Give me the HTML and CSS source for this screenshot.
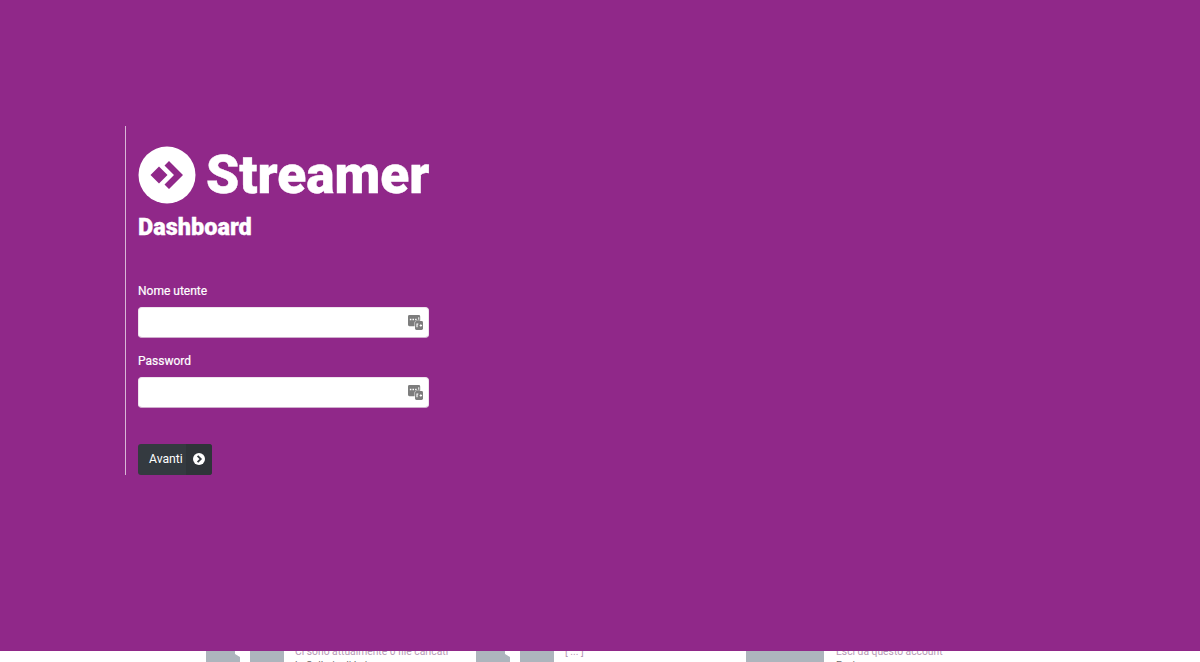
FILE: index.html
```html
<!DOCTYPE html>
<html lang="it">
<head>
<meta charset="utf-8">
<title>Streamer Dashboard</title>
<link rel="stylesheet" href="styles.css">
</head>
<body>
<div class="behind">
  <section class="widget">
    <div class="thumb small notch"></div>
    <div class="thumb small"></div>
    <div class="copy">
      <p class="link">Ci sono attualmente 0 file caricati</p>
      <p class="dark">la Galleria di Lei</p>
    </div>
  </section>
  <section class="widget">
    <div class="thumb small notch"></div>
    <div class="thumb small"></div>
    <div class="copy">
      <p class="link">[ ... ]</p>
    </div>
  </section>
  <section class="widget">
    <div class="thumb wide"></div>
    <div class="copy wide-copy">
      <p class="link">Esci da questo account</p>
      <p class="dark">Esci</p>
    </div>
  </section>
</div>

<main class="overlay">
  <form class="panel">
    <div class="brand">
      <svg class="logo" viewBox="0 0 58 58" aria-hidden="true">
        <circle cx="29" cy="29" r="28.5" fill="#fff"/>
        <path d="M21 20.500 29.500 29 21 37.500 12.500 29z" fill="#902889"/>
        <path d="M31 15 45 29 31 43l-4.500-4.500L36 29l-9.500-9.500z" fill="#902889"/>
      </svg>
      <span class="name">Streamer</span>
    </div>
    <h1 class="title">Dashboard</h1>

    <label class="label" for="user">Nome utente</label>
    <div class="field">
      <input class="input" id="user" type="text">
      <svg class="keyicon" viewBox="0 0 16 16" aria-hidden="true">
        <path d="M1.500 0h10A1.500 1.500 0 0 1 13 1.500V6H9a2 2 0 0 0-2 2v4H1.500A1.500 1.500 0 0 1 0 10.500v-9A1.500 1.500 0 0 1 1.500 0z" fill="#7d7d7d"/>
        <rect x="7.500" y="6.500" width="8.500" height="9.500" rx="1.500" fill="#7d7d7d"/>
        <path d="M2 4h1.600v1.600H2zM4.800 4h1.600v1.600H4.800zM7.600 4h1.600v1.600H7.600zM11 2.500h1v2.500h-1z" fill="#fff"/>
        <path d="M9 9h2v1.200h-.8V13H9zM12.400 10.600h2.600v1h-2.600zM13.200 9.800h1v2.600h-1z" fill="#fff"/>
      </svg>
    </div>

    <label class="label" for="pass">Password</label>
    <div class="field">
      <input class="input" id="pass" type="password">
      <svg class="keyicon" viewBox="0 0 16 16" aria-hidden="true">
        <path d="M1.500 0h10A1.500 1.500 0 0 1 13 1.500V6H9a2 2 0 0 0-2 2v4H1.500A1.500 1.500 0 0 1 0 10.500v-9A1.500 1.500 0 0 1 1.500 0z" fill="#7d7d7d"/>
        <rect x="7.500" y="6.500" width="8.500" height="9.500" rx="1.500" fill="#7d7d7d"/>
        <path d="M2 4h1.600v1.600H2zM4.800 4h1.600v1.600H4.800zM7.600 4h1.600v1.600H7.600zM11 2.500h1v2.500h-1z" fill="#fff"/>
        <path d="M9 9h2v1.200h-.8V13H9zM12.400 10.600h2.600v1h-2.600zM13.200 9.800h1v2.600h-1z" fill="#fff"/>
      </svg>
    </div>

    <button class="next" type="button">
      <span class="next-text">Avanti</span>
      <span class="next-icon">
        <svg viewBox="0 0 12 12" aria-hidden="true">
          <circle cx="6" cy="6" r="6" fill="#fff"/>
          <path d="M4.600 2.800 7.800 6 4.600 9.200" fill="none" stroke="#343a40" stroke-width="1.800"/>
        </svg>
      </span>
    </button>
  </form>
</main>
</body>
</html>
```

FILE: styles.css
```css
* { box-sizing: border-box; }
html, body { margin: 0; height: 100%; overflow: hidden; background: #fff; }
body { position: relative; font-family: Roboto, "Liberation Sans", sans-serif; }

.behind {
  display: flex;
  gap: 40px;
  padding: 644px 0 0 206px;
  height: 662px;
  overflow: hidden;
}
.widget { display: flex; width: 230px; gap: 10px; }
.thumb { background: #adb5bd; height: 40px; flex: none; }
.small { width: 34px; }
.wide { width: 78px; }
.notch { clip-path: polygon(0 0, 29px 0, 29px 10px, 34px 13px, 34px 100%, 0 100%); }
.copy { padding-left: 1px; padding-top: 1px; font-size: 10.300px; line-height: 14px; }
.wide-copy { padding-left: 2px; }
.copy p { margin: 0; white-space: nowrap; }
.link { color: #b79ab5; }
.dark { color: #6b6b6b; }

.overlay {
  position: absolute;
  inset: 0 0 11px 0;
  background: #902889;
  padding: 126px 0 0 125px;
}
.panel {
  width: 304px;
  height: 349px;
  border-left: 1px solid #d9b6d6;
  padding: 20px 0 0 12px;
  display: flex;
  flex-direction: column;
  align-items: flex-start;
}
.brand { display: flex; align-items: center; gap: 10px; height: 58px; }
.logo { width: 58px; height: 58px; flex: none; }
.name {
  color: #fff;
  font-size: 53.200px;
  line-height: 58px;
  font-weight: 900;
  white-space: nowrap;
  -webkit-text-stroke: .4px #fff;
}
.title {
  margin: 7px 0 0;
  color: #fff;
  font-size: 23.500px;
  line-height: 32px;
  font-weight: 900;
  -webkit-text-stroke: .3px #fff;
}
.label {
  color: #fff;
  font-size: 12px;
  line-height: 18px;
  font-weight: 400;
  margin-bottom: 7px;
  -webkit-text-stroke: .2px #fff;
}
.title + .label { margin-top: 39px; }
.field { position: relative; width: 291px; height: 31px; margin-bottom: 14px; }
.input {
  display: block;
  width: 100%;
  height: 100%;
  border: 1px solid #efe3ee;
  border-bottom-color: #cfaecd;
  border-radius: 4px;
  background: #fff;
  padding: 0 30px 0 10px;
}
.keyicon { position: absolute; right: 6px; top: 8px; width: 15px; height: 15px; }
.next {
  display: flex;
  margin-top: 22px;
  padding: 0;
  width: 74px;
  height: 31px;
  border: 0;
  border-radius: 3px;
  overflow: hidden;
  background: #343a40;
  color: #fff;
  font: 400 12.200px/30px Roboto, "Liberation Sans", sans-serif;
}
.next-text { width: 48px; padding-left: 11px; text-align: left; white-space: nowrap; }
.next-icon {
  flex: 1;
  display: flex;
  align-items: center;
  justify-content: center;
  padding-bottom: 1px;
  background: #2f3439;
}
.next-icon svg { width: 12px; height: 12px; }
```
